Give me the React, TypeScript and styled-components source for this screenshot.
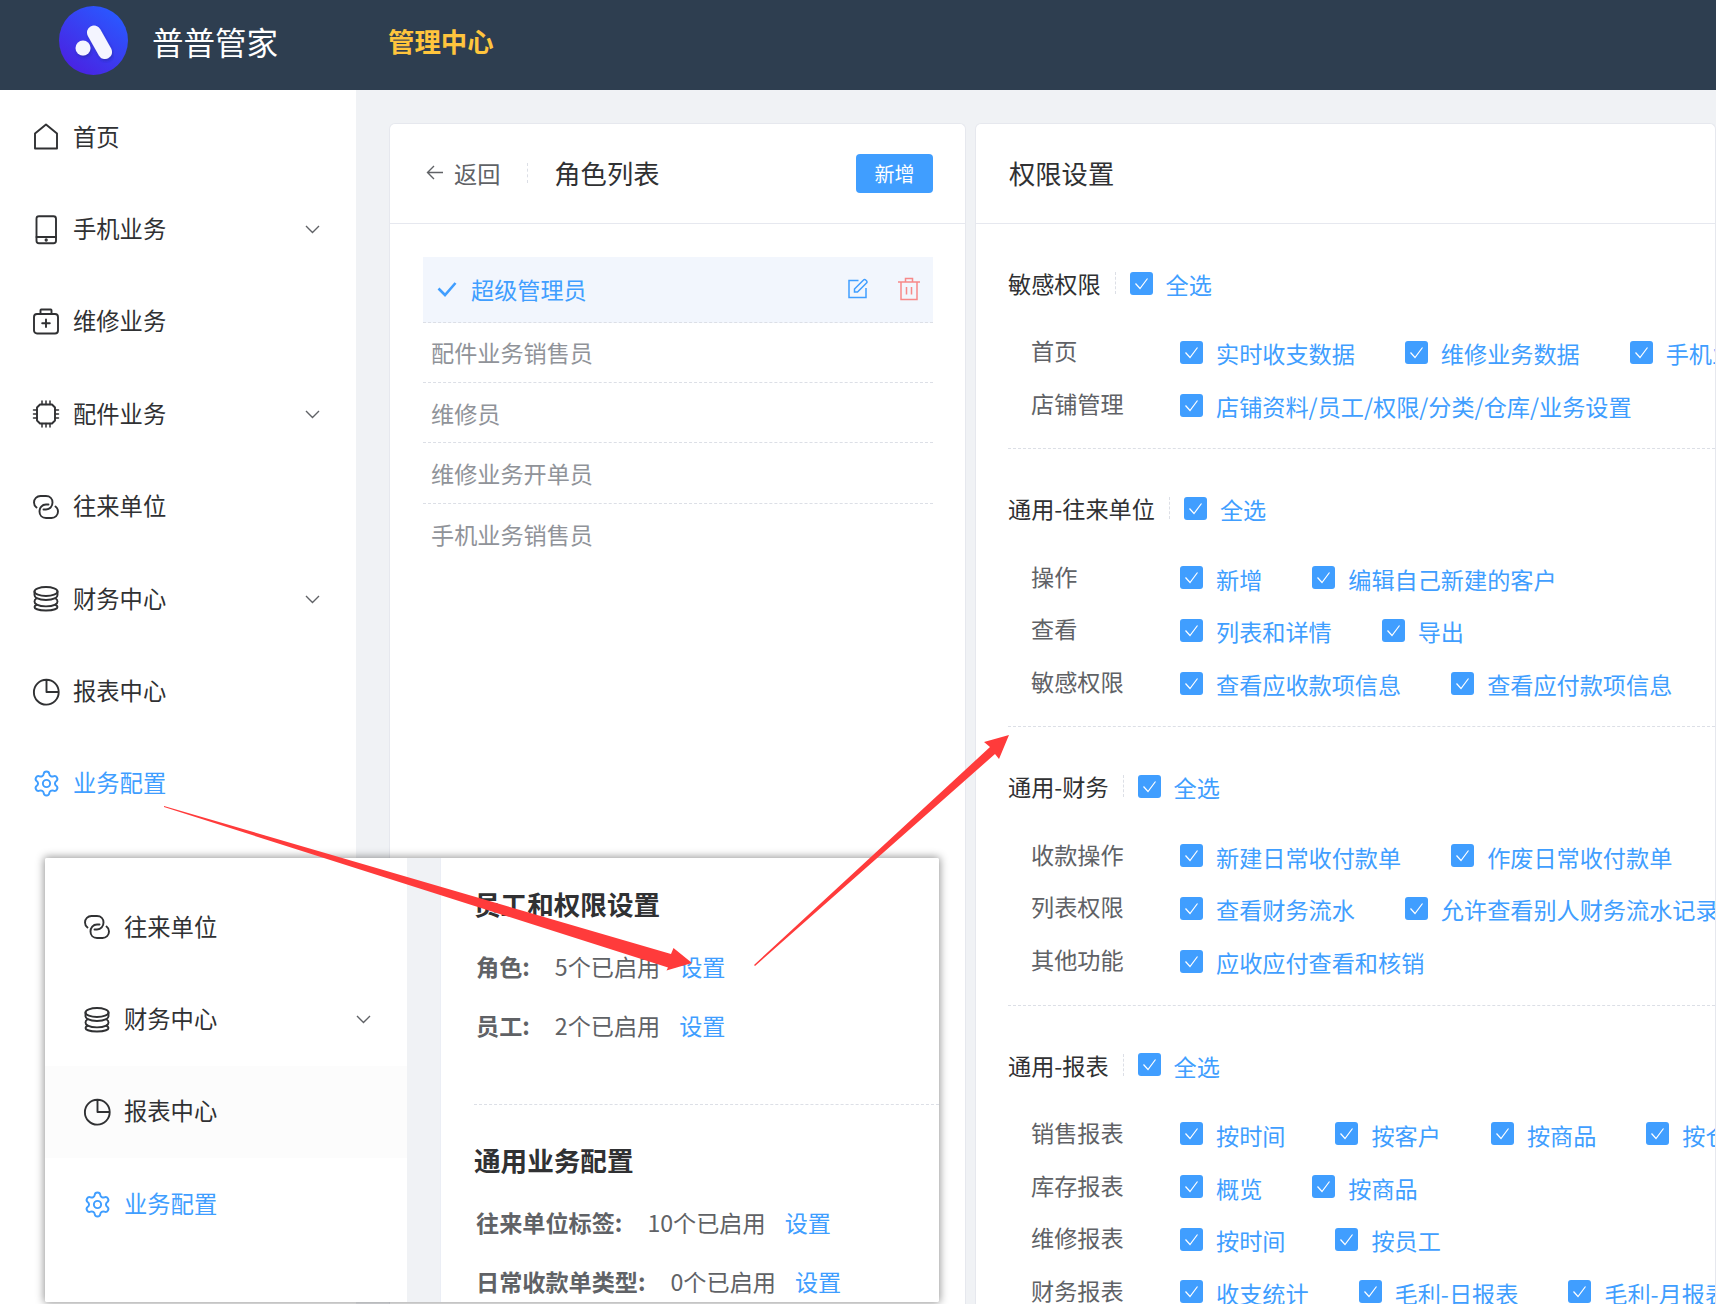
import React from "react";
import styled, { createGlobalStyle } from "styled-components";
import { Settings } from "lucide-react";

const Global = createGlobalStyle`
  html, body { margin: 0; padding: 0; background: #f0f2f5; }
  * { box-sizing: border-box; }
  body { font-family: "Noto Sans CJK SC", "Noto Sans", sans-serif; }
`;

const Page = styled.div`
  position: relative;
  width: 1716px;
  height: 1304px;
  overflow: hidden;
  display: flex;
  flex-direction: column;
  background: #f0f2f5;
  font-size: 23.15px;
  color: #303133;
`;

const TopBar = styled.header`
  flex: none;
  height: 90px;
  display: flex;
  align-items: center;
  padding: 0 0 9px 59px;
  background: #2e3e50;
`;
const LogoMark = styled.svg`
  width: 69px;
  height: 69px;
  flex: none;
`;
const Brand = styled.div`
  margin-left: 24px;
  width: 236px;
  font-size: 31.5px;
  line-height: 40px;
  color: #fff;
`;
const Centre = styled.div`
  font-size: 26.4px;
  font-weight: 700;
  line-height: 36px;
  color: #ffc53d;
`;

const Body = styled.div`
  flex: 1;
  min-height: 0;
  display: flex;
`;
const Sidebar = styled.nav`
  flex: none;
  width: 356px;
  padding-top: 1px;
  background: #fff;
`;
const NavRow = styled.div<{ $active?: boolean; $inset?: number; $hover?: boolean }>`
  height: 92.4px;
  display: flex;
  align-items: center;
  gap: 14px;
  padding-left: ${(p) => p.$inset ?? 33}px;
  padding-right: 36px;
  color: ${(p) => (p.$active ? "#409eff" : "#303133")};
  background: ${(p) => (p.$hover ? "#fcfcfc" : "transparent")};
`;
const NavLabel = styled.span`
  flex: 1;
  font-size: 23.3px;
  line-height: 32px;
  position: relative;
  top: -1.5px;
`;
const IconBox = styled.svg`
  width: 26px;
  height: 26px;
  flex: none;
  overflow: visible;
  fill: none;
  stroke: currentColor;
  stroke-width: 1.9;
  stroke-linejoin: round;
  stroke-linecap: round;
`;
const GearSlot = styled.span`
  flex: none;
  width: 26px;
  height: 26px;
  display: flex;
  align-items: center;
  justify-content: center;
`;
const Chevron = styled.svg`
  width: 15px;
  height: 9px;
  flex: none;
  fill: none;
  stroke: #606266;
  stroke-width: 1.4;
`;

const Main = styled.main`
  flex: 1;
  min-width: 0;
  display: flex;
  gap: 9px;
  padding: 33px 0 0 33px;
`;
const Card = styled.section<{ $width?: number }>`
  flex: ${(p) => (p.$width ? `none` : 1)};
  width: ${(p) => (p.$width ? `${p.$width}px` : "auto")};
  min-width: 0;
  overflow: hidden;
  background: #fff;
  border: 1px solid #e6e8ee;
  border-bottom: 0;
  border-radius: 6px 6px 0 0;
`;
const CardHead = styled.div`
  height: 100px;
  display: flex;
  align-items: center;
  padding: 0 32px 0 33px;
  border-bottom: 1px solid #e6e8ef;
`;
const Back = styled.div`
  display: flex;
  align-items: center;
  gap: 11px;
  color: #606266;
  padding-left: 3px;
  margin-bottom: 2px;
`;
const BackArrow = styled.svg`
  width: 17px;
  height: 15px;
  fill: none;
  stroke: #606266;
  stroke-width: 1.4;
`;
const HeadRule = styled.span`
  width: 0;
  height: 20px;
  margin: 0 26px 2px 27px;
  border-left: 1px dashed #dcdfe6;
`;
const CardTitle = styled.h2`
  flex: 1;
  margin: 0 0 2px;
  font-size: 26.3px;
  font-weight: 400;
  line-height: 36px;
  color: #303133;
`;
const AddButton = styled.button`
  width: 77px;
  height: 39px;
  padding: 0;
  border: 0;
  border-radius: 4px;
  background: #409eff;
  color: #fff;
  font: 400 20px "Noto Sans CJK SC", sans-serif;
`;

const RoleList = styled.ul`
  list-style: none;
  margin: 33px 32px 0 33px;
  padding: 0;
`;
const RoleRow = styled.li<{ $active?: boolean }>`
  height: ${(p) => (p.$active ? 65.5 : 60.4)}px;
  display: flex;
  align-items: center;
  padding: 0 13px 0 ${(p) => (p.$active ? 14 : 8)}px;
  border-bottom: 1px dashed #dcdfe6;
  color: ${(p) => (p.$active ? "#409eff" : "#909399")};
  background: ${(p) => (p.$active ? "#f2f6fd" : "transparent")};
`;
const RoleRowPlain = styled(RoleRow)`
  border-bottom: 0;
`;
const RoleName = styled.span`
  flex: 1;
  line-height: 32px;
`;
const CheckMark = styled.svg`
  width: 20px;
  height: 16px;
  margin-right: 14px;
  fill: none;
  stroke: #409eff;
  stroke-width: 2.6;
`;
const RowIcon = styled.svg<{ $danger?: boolean }>`
  width: 22px;
  height: 22px;
  margin-left: 30px;
  fill: none;
  stroke: ${(p) => (p.$danger ? "#f78989" : "#409eff")};
  stroke-width: 1.5;
  overflow: visible;
`;

const Section = styled.div`
  margin-left: 32px;
  padding: 36px 0 17px;
  border-bottom: 1px dashed #dcdfe6;
`;
const SectionHead = styled.div`
  height: 46px;
  margin-bottom: 20px;
  display: flex;
  align-items: center;
  white-space: nowrap;
`;
const SectionRule = styled.span`
  width: 0;
  height: 22px;
  margin: 0 14px;
  border-left: 1px dashed #dcdfe6;
`;
const PermRow = styled.div`
  height: 52.7px;
  display: flex;
  align-items: center;
  padding-left: 23px;
  white-space: nowrap;
`;
const PermLabel = styled.span`
  flex: none;
  width: 149px;
  color: #606266;
  line-height: 30px;
  position: relative;
  top: -2px;
`;
const PermItem = styled.label`
  flex: none;
  display: flex;
  align-items: center;
  gap: 13px;
  margin-right: 50px;
  color: #409eff;
`;
const SelectAll = styled(PermItem)`
  margin-right: 0;
`;
const PermText = styled.span`
  line-height: 30px;
  position: relative;
  top: 1px;
`;
const Box = styled.span`
  flex: none;
  width: 23px;
  height: 23px;
  display: flex;
  align-items: center;
  justify-content: center;
  background: #409eff;
  border-radius: 3px;
`;
const BoxTick = styled.svg`
  width: 15px;
  height: 13px;
  fill: none;
  stroke: #fff;
  stroke-width: 1.2;
`;

const Inset = styled.div`
  position: absolute;
  left: 45px;
  top: 858px;
  width: 894px;
  height: 444px;
  display: flex;
  overflow: hidden;
  background: #fff;
  border-radius: 2px;
`;
const InsetShadow = styled.div`
  position: absolute;
  left: 45px;
  top: 858px;
  width: 894px;
  height: 444px;
  border-radius: 2px;
  box-shadow: 0 0 8px 1px rgba(0, 0, 0, 0.42);
`;
const InsetNav = styled.div`
  flex: none;
  width: 362px;
  padding-top: 23px;
`;
const InsetGap = styled.div`
  flex: none;
  width: 33px;
  background: #f0f2f5;
`;
const InsetCard = styled.div`
  flex: 1;
  min-width: 0;
  padding: 27px 0 0 33px;
  border-left: 1px solid #ebeef5;
`;
const InsetTitle = styled.h3`
  margin: 0 0 13px;
  font-size: 26.6px;
  font-weight: 700;
  line-height: 38px;
  color: #303133;
`;
const InsetRow = styled.div`
  height: 59.5px;
  display: flex;
  align-items: center;
  padding-left: 2px;
  color: #606266;
  white-space: nowrap;
`;
const InsetKey = styled.b`
  font-weight: 700;
  margin-right: 25px;
`;
const InsetLink = styled.a`
  margin-left: 19px;
  color: #409eff;
`;
const InsetRule = styled.div`
  margin-top: 49px;
  margin-bottom: 36px;
  border-top: 1px dashed #dcdfe6;
`;

const Arrows = styled.svg`
  position: absolute;
  left: 0;
  top: 0;
  width: 1716px;
  height: 1304px;
  pointer-events: none;
  fill: #ff3b3b;
`;

const Home = () => (
  <IconBox viewBox="0 0 26 26"><path d="M2 24.5V9.5L13 .5l11 9v15z" /></IconBox>
);
const Phone = () => (
  <IconBox viewBox="0 0 26 26">
    <rect x="3.5" y="-.8" width="19.5" height="27" rx="2.5" />
    <path d="M3.5 20h19.5" />
    <circle cx="13.2" cy="23" r=".7" fill="currentColor" />
  </IconBox>
);
const MedBox = () => (
  <IconBox viewBox="0 0 26 26">
    <rect x="1" y="5" width="24" height="19.5" rx="3" />
    <path d="M7.5 5V1.2a.7.7 0 0 1 .7-.7h9.6a.7.7 0 0 1 .7.7V5M13 10.5v7.5M9.2 14.2h7.6" />
  </IconBox>
);
const Chip = () => (
  <IconBox viewBox="0 0 26 26">
    <path d="M7 3.500h12l3 3v13l-3 3H7l-3-3v-13z" />
    <path d="M9 3.500V0M13 3.500V0M17 3.500V0M9 26v-3.500M13 26v-3.500M17 26v-3.500M4 9H.5M4 13H.5M4 17H.5M25.500 9H22M25.500 13H22M25.500 17H22" strokeWidth="1.5" />
  </IconBox>
);
const Link = () => (
  <IconBox viewBox="0 0 26 26">
    <path d="M3.500 13.500C1.800 12.300 1 10.500 1 8.500 1 4.700 3.800 2 7.500 2H13c4 0 6.500 2.800 6.500 6.500s-2.500 7-6.500 7h-2.500" />
    <path d="M22.500 12.500c1.700 1.200 2.500 3 2.500 5 0 3.800-2.800 6.500-6.500 6.500H13c-4 0-6.500-2.800-6.500-6.500s2.500-7 6.500-7h2.500" />
  </IconBox>
);
const Coins = () => (
  <IconBox viewBox="0 0 26 26">
    <ellipse cx="13" cy="5.500" rx="11.500" ry="4.500" />
    <path d="M1.500 5.500V9c0 1.300.8 2.400 2.200 3.200-1.400.8-2.200 1.900-2.200 3.200 0 1.300.8 2.400 2.200 3.200-1.400.8-2.200 1.500-2.200 2.400 0 2 5 3.500 11.500 3.500s11.500-1.500 11.500-3.500c0-.9-.8-1.600-2.200-2.400 1.400-.8 2.200-1.900 2.200-3.200 0-1.300-.8-2.400-2.200-3.200 1.400-.8 2.200-1.900 2.200-3.200V5.500" />
    <path d="M3.700 12.200c2.500 1.200 5.500 1.800 9.300 1.800s6.800-.6 9.300-1.800M3.700 18.600c2.500 1.200 5.500 1.800 9.300 1.800s6.800-.6 9.300-1.800" />
  </IconBox>
);
const Pie = () => (
  <IconBox viewBox="0 0 26 26">
    <path d="M13.500 .8V13H25.700A12.400 12.400 0 1 1 13.500 .8c6.800 0 12.200 5.400 12.200 12.200" />
  </IconBox>
);
const Gear = () => (
  <GearSlot><Settings size={29} strokeWidth={1.6} style={{ flex: "none" }} /></GearSlot>
);
const Down = () => (
  <Chevron viewBox="0 0 15 9"><path d="M1 1l6.500 6.500L14 1" /></Chevron>
);
const Tick = () => (
  <Box>
    <BoxTick viewBox="0 0 15 13"><path d="M1.500 6.500l4.500 5L13.500 1.500" /></BoxTick>
  </Box>
);

type Perm = { label: string; items: string[] };
type Group = { title: string; rows: Perm[] };

const groups: Group[] = [
  {
    title: "敏感权限",
    rows: [
      { label: "首页", items: ["实时收支数据", "维修业务数据", "手机业务数据"] },
      { label: "店铺管理", items: ["店铺资料/员工/权限/分类/仓库/业务设置"] },
    ],
  },
  {
    title: "通用-往来单位",
    rows: [
      { label: "操作", items: ["新增", "编辑自己新建的客户"] },
      { label: "查看", items: ["列表和详情", "导出"] },
      { label: "敏感权限", items: ["查看应收款项信息", "查看应付款项信息"] },
    ],
  },
  {
    title: "通用-财务",
    rows: [
      { label: "收款操作", items: ["新建日常收付款单", "作废日常收付款单"] },
      { label: "列表权限", items: ["查看财务流水", "允许查看别人财务流水记录"] },
      { label: "其他功能", items: ["应收应付查看和核销"] },
    ],
  },
  {
    title: "通用-报表",
    rows: [
      { label: "销售报表", items: ["按时间", "按客户", "按商品", "按仓库"] },
      { label: "库存报表", items: ["概览", "按商品"] },
      { label: "维修报表", items: ["按时间", "按员工"] },
      { label: "财务报表", items: ["收支统计", "毛利-日报表", "毛利-月报表"] },
    ],
  },
];

const nav = [
  { name: "首页", icon: <Home /> },
  { name: "手机业务", icon: <Phone />, more: true },
  { name: "维修业务", icon: <MedBox /> },
  { name: "配件业务", icon: <Chip />, more: true },
  { name: "往来单位", icon: <Link /> },
  { name: "财务中心", icon: <Coins />, more: true },
  { name: "报表中心", icon: <Pie /> },
  { name: "业务配置", icon: <Gear />, active: true },
];

const roles = ["配件业务销售员", "维修员", "维修业务开单员"];

export default function App() {
  return (
    <Page>
      <Global />
      <TopBar>
        <LogoMark viewBox="0 0 69 69">
          <defs>
            <linearGradient id="logoFill" x1="0.85" y1="0.1" x2="0.2" y2="0.95">
              <stop offset="0" stopColor="#2a58ff" />
              <stop offset="1" stopColor="#4a22e2" />
            </linearGradient>
            <filter id="logoGlow" x="-30%" y="-30%" width="160%" height="160%">
              <feDropShadow dx="1" dy="2" stdDeviation="1.600" floodColor="#1a2aa0" floodOpacity="0.55" />
            </filter>
          </defs>
          <circle cx="34.500" cy="34.500" r="34.500" fill="url(#logoFill)" />
          <g filter="url(#logoGlow)" fill="#f4f5ff">
            <path d="M35 26.500L46 46" stroke="#f4f5ff" strokeWidth="14" strokeLinecap="round" fill="none" />
            <circle cx="24" cy="42" r="7.500" />
          </g>
        </LogoMark>
        <Brand>普普管家</Brand>
        <Centre>管理中心</Centre>
      </TopBar>
      <Body>
        <Sidebar>
          {nav.map((n) => (
            <NavRow key={n.name} $active={n.active}>
              {n.icon}
              <NavLabel>{n.name}</NavLabel>
              {n.more && <Down />}
            </NavRow>
          ))}
        </Sidebar>
        <Main>
          <Card $width={577}>
            <CardHead>
              <Back>
                <BackArrow viewBox="0 0 17 15"><path d="M17 7.500H1.500M8 1L1.500 7.500 8 14" /></BackArrow>
                返回
              </Back>
              <HeadRule />
              <CardTitle>角色列表</CardTitle>
              <AddButton>新增</AddButton>
            </CardHead>
            <RoleList>
              <RoleRow $active>
                <CheckMark viewBox="0 0 20 16"><path d="M1.500 7.500L8 14 18.500 2" /></CheckMark>
                <RoleName>超级管理员</RoleName>
                <RowIcon viewBox="0 0 22 22">
                  <path d="M12.500 2.500H3v17h17V10" />
                  <path d="M8.500 14v-3L17.500 2a1.500 1.500 0 0 1 2.200 0l.8.8a1.500 1.500 0 0 1 0 2.200L11.500 14z" />
                </RowIcon>
                <RowIcon $danger viewBox="0 0 22 22">
                  <path d="M0 4h22M7.500 4V.5h7V4M3 4v17.500h16V4M8.500 9v7.500M13.500 9v7.500" />
                </RowIcon>
              </RoleRow>
              {roles.map((r) => (
                <RoleRow key={r}><RoleName>{r}</RoleName></RoleRow>
              ))}
              <RoleRowPlain><RoleName>手机业务销售员</RoleName></RoleRowPlain>
            </RoleList>
          </Card>
          <Card>
            <CardHead><CardTitle>权限设置</CardTitle></CardHead>
            {groups.map((g) => (
              <Section key={g.title}>
                <SectionHead>
                  {g.title}
                  <SectionRule />
                  <SelectAll><Tick /><PermText>全选</PermText></SelectAll>
                </SectionHead>
                {g.rows.map((r) => (
                  <PermRow key={r.label}>
                    <PermLabel>{r.label}</PermLabel>
                    {r.items.map((i) => (
                      <PermItem key={i}><Tick /><PermText>{i}</PermText></PermItem>
                    ))}
                  </PermRow>
                ))}
              </Section>
            ))}
          </Card>
        </Main>
      </Body>

      <InsetShadow />
      <Inset>
        <InsetNav>
          <NavRow $inset={39}><Link /><NavLabel>往来单位</NavLabel></NavRow>
          <NavRow $inset={39}><Coins /><NavLabel>财务中心</NavLabel><Down /></NavRow>
          <NavRow $inset={39} $hover><Pie /><NavLabel>报表中心</NavLabel></NavRow>
          <NavRow $inset={39} $active><Gear /><NavLabel>业务配置</NavLabel></NavRow>
        </InsetNav>
        <InsetGap />
        <InsetCard>
          <InsetTitle>员工和权限设置</InsetTitle>
          <InsetRow><InsetKey>角色:</InsetKey>5个已启用<InsetLink>设置</InsetLink></InsetRow>
          <InsetRow><InsetKey>员工:</InsetKey>2个已启用<InsetLink>设置</InsetLink></InsetRow>
          <InsetRule />
          <InsetTitle>通用业务配置</InsetTitle>
          <InsetRow><InsetKey>往来单位标签:</InsetKey>10个已启用<InsetLink>设置</InsetLink></InsetRow>
          <InsetRow><InsetKey>日常收款单类型:</InsetKey>0个已启用<InsetLink>设置</InsetLink></InsetRow>
        </InsetCard>
      </Inset>

      <Arrows viewBox="0 0 1716 1304">
        <polygon points="164,806 671,954 673.500,948 692,963 666.500,970.500 668,967.500 164,807" />
        <polygon points="754,965 990,747 984,742 1009,735 999,759 995,754 755,966" />
      </Arrows>
    </Page>
  );
}
